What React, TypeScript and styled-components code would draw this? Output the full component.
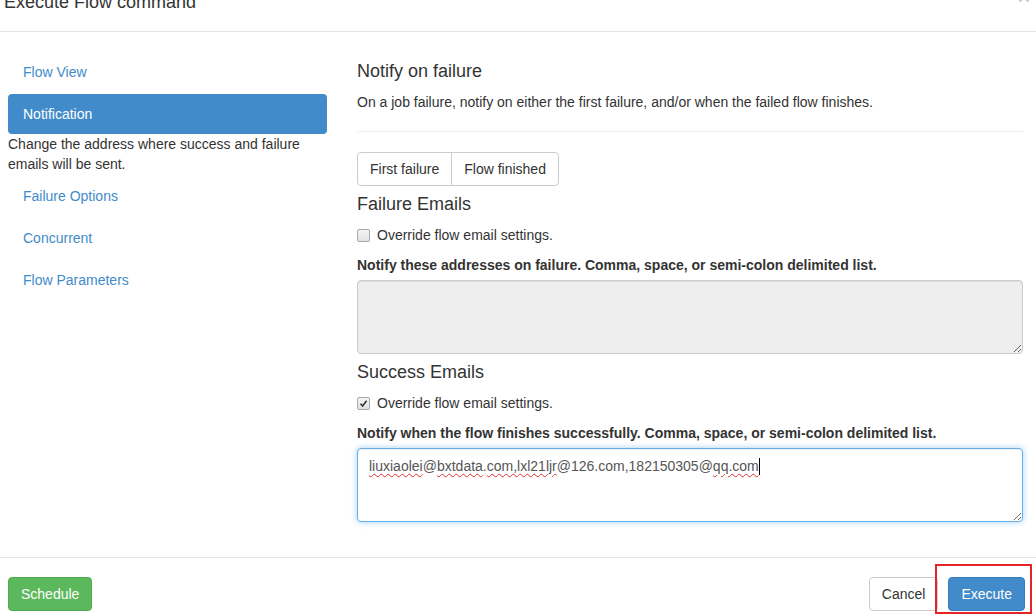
import styled, { createGlobalStyle } from "styled-components"

const GlobalStyle = createGlobalStyle`
    html, body {
        margin: 0;
        padding: 0;
        background: #fff;
        overflow: hidden;
    }
    body {
        font-family: "Liberation Sans", Arial, sans-serif;
        font-size: 14px;
        line-height: 20px;
        color: #333;
    }
    * {
        box-sizing: border-box;
    }
`

const Modal = styled.div`
    width: 1036px;
    height: 616px;
    display: flex;
    flex-direction: column;
`

const Header = styled.div`
    height: 32px;
    padding: 0 6px 0 4px;
    display: flex;
    justify-content: space-between;
    align-items: flex-start;
    border-bottom: 1px solid #e5e5e5;
`

const Title = styled.h4`
    margin: -8px 0 0;
    font-size: 18px;
    font-weight: 400;
    line-height: 20px;
    color: #333;
`

const Close = styled.span`
    margin-top: -13px;
    font-size: 21px;
    font-weight: 700;
    line-height: 20px;
    color: #000;
    opacity: 0.2;
`

const Body = styled.div`
    flex: 1;
    display: flex;
    gap: 30px;
    padding: 20px 13px 0 8px;
`

const SideNav = styled.div`
    width: 319px;
    flex-shrink: 0;
    display: flex;
    flex-direction: column;
    gap: 2px;
`

const Pill = styled.div<{ $active?: boolean }>`
    height: 40px;
    padding: 10px 15px;
    border-radius: 4px;
    color: ${p => (p.$active ? "#fff" : "#428bca")};
    background: ${p => (p.$active ? "#428bca" : "transparent")};
`

const PillHelp = styled.div`
    margin-top: -2px;
    color: #333;
`

const Content = styled.div`
    flex: 1;
    display: flex;
    flex-direction: column;
`

const SectionTitle = styled.h4<{ $top?: number }>`
    margin: ${p => p.$top ?? 8}px 0 11px;
    font-size: 18px;
    font-weight: 400;
    line-height: 20px;
    color: #333;
`

const Text = styled.p`
    margin: 0;
`

const Rule = styled.hr`
    margin: 19px 0 20px;
    border: 0;
    border-top: 1px solid #eee;
    height: 0;
`

const BtnGroup = styled.div`
    display: flex;
    align-self: flex-start;
`

const GroupBtn = styled.button<{ $first?: boolean }>`
    height: 34px;
    padding: 6px 12px;
    font-family: inherit;
    font-size: 14px;
    color: #333;
    background: #fff;
    border: 1px solid #ccc;
    margin-left: ${p => (p.$first ? 0 : -1)}px;
    border-radius: ${p => (p.$first ? "4px 0 0 4px" : "0 4px 4px 0")};
`

const CheckRow = styled.label`
    display: flex;
    align-items: center;
    gap: 7px;
    height: 20px;
    margin-bottom: 10px;
`

const Box = styled.span`
    width: 13px;
    height: 13px;
    border: 1px solid #a9a9a9;
    border-radius: 2px;
    background: linear-gradient(#f4f4f4, #e2e2e2);
    display: flex;
    align-items: center;
    justify-content: center;
`

const FieldLabel = styled.label`
    display: block;
    font-weight: 700;
    margin-bottom: 5px;
`

const Area = styled.div<{ $disabled?: boolean; $focus?: boolean }>`
    height: 74px;
    flex-shrink: 0;
    padding: 7px 12px 6px 11px;
    border: 1px solid ${p => (p.$focus ? "#66afe9" : "#ccc")};
    border-radius: 4px;
    background: ${p => (p.$disabled ? "#eee" : "#fff")};
    box-shadow: ${p =>
        p.$focus
            ? "inset 0 1px 1px rgba(0,0,0,.075), 0 0 6px rgba(102,175,233,.6)"
            : "inset 0 1px 1px rgba(0,0,0,.075)"};
    color: #555;
    resize: both;
    overflow: auto;
    white-space: nowrap;
`

const Misspelled = styled.span`
    text-decoration: underline wavy #e03030;
    text-decoration-thickness: 1px;
    text-underline-offset: 2px;
`

const Caret = styled.span`
    display: inline-block;
    width: 1px;
    height: 17px;
    background: #000;
    vertical-align: -4px;
`

const Footer = styled.div`
    height: 59px;
    padding: 19px 11px 0 8px;
    border-top: 1px solid #e5e5e5;
    display: flex;
    align-items: flex-start;
    gap: 10px;
`

const Btn = styled.button<{ $kind: "success" | "default" | "primary" }>`
    height: 34px;
    padding: 6px 12px;
    font-family: inherit;
    font-size: 14px;
    border-radius: 4px;
    border: 1px solid
        ${p => (p.$kind === "success" ? "#4cae4c" : p.$kind === "primary" ? "#357ebd" : "#ccc")};
    background: ${p => (p.$kind === "success" ? "#5cb85c" : p.$kind === "primary" ? "#428bca" : "#fff")};
    color: ${p => (p.$kind === "default" ? "#333" : "#fff")};
`

const Spacer = styled.div`
    flex: 1;
`

const Marked = styled.div`
    position: relative;
`

const Highlight = styled.div`
    position: absolute;
    left: -13px;
    top: -13px;
    right: -7px;
    bottom: -3px;
    border: 2.5px solid #e32526;
    pointer-events: none;
`

const Check = () => (
    <svg width="9" height="9" viewBox="0 0 9 9">
        <path d="M1.5 4.8 L3.6 7 L7.6 1.8" fill="none" stroke="#333" strokeWidth="1.6" />
    </svg>
)

const App = () => {
    return <>
        <GlobalStyle />
        <Modal>
            <Header>
                <Title>Execute Flow command</Title>
                <Close>×</Close>
            </Header>

            <Body>
                <SideNav>
                    <Pill>Flow View</Pill>
                    <Pill $active>Notification</Pill>
                    <PillHelp>Change the address where success and failure emails will be sent.</PillHelp>
                    <Pill>Failure Options</Pill>
                    <Pill>Concurrent</Pill>
                    <Pill>Flow Parameters</Pill>
                </SideNav>

                <Content>
                    <SectionTitle $top={9}>Notify on failure</SectionTitle>
                    <Text>On a job failure, notify on either the first failure, and/or when the failed flow finishes.</Text>
                    <Rule />
                    <BtnGroup>
                        <GroupBtn $first>First failure</GroupBtn>
                        <GroupBtn>Flow finished</GroupBtn>
                    </BtnGroup>

                    <SectionTitle>Failure Emails</SectionTitle>
                    <CheckRow>
                        <Box />
                        Override flow email settings.
                    </CheckRow>
                    <FieldLabel>Notify these addresses on failure. Comma, space, or semi-colon delimited list.</FieldLabel>
                    <Area $disabled />

                    <SectionTitle>Success Emails</SectionTitle>
                    <CheckRow>
                        <Box><Check /></Box>
                        Override flow email settings.
                    </CheckRow>
                    <FieldLabel>Notify when the flow finishes successfully. Comma, space, or semi-colon delimited list.</FieldLabel>
                    <Area $focus>
                        <Misspelled>liuxiaolei</Misspelled>@<Misspelled>bxtdata</Misspelled>.
                        <Misspelled>com,lxl21ljr</Misspelled>@126.com,182150305@<Misspelled>qq.com</Misspelled>
                        <Caret />
                    </Area>
                </Content>
            </Body>

            <Footer>
                <Btn $kind="success">Schedule</Btn>
                <Spacer />
                <Btn $kind="default">Cancel</Btn>
                <Marked>
                    <Btn $kind="primary">Execute</Btn>
                    <Highlight />
                </Marked>
            </Footer>
        </Modal>
    </>
}

export default App
